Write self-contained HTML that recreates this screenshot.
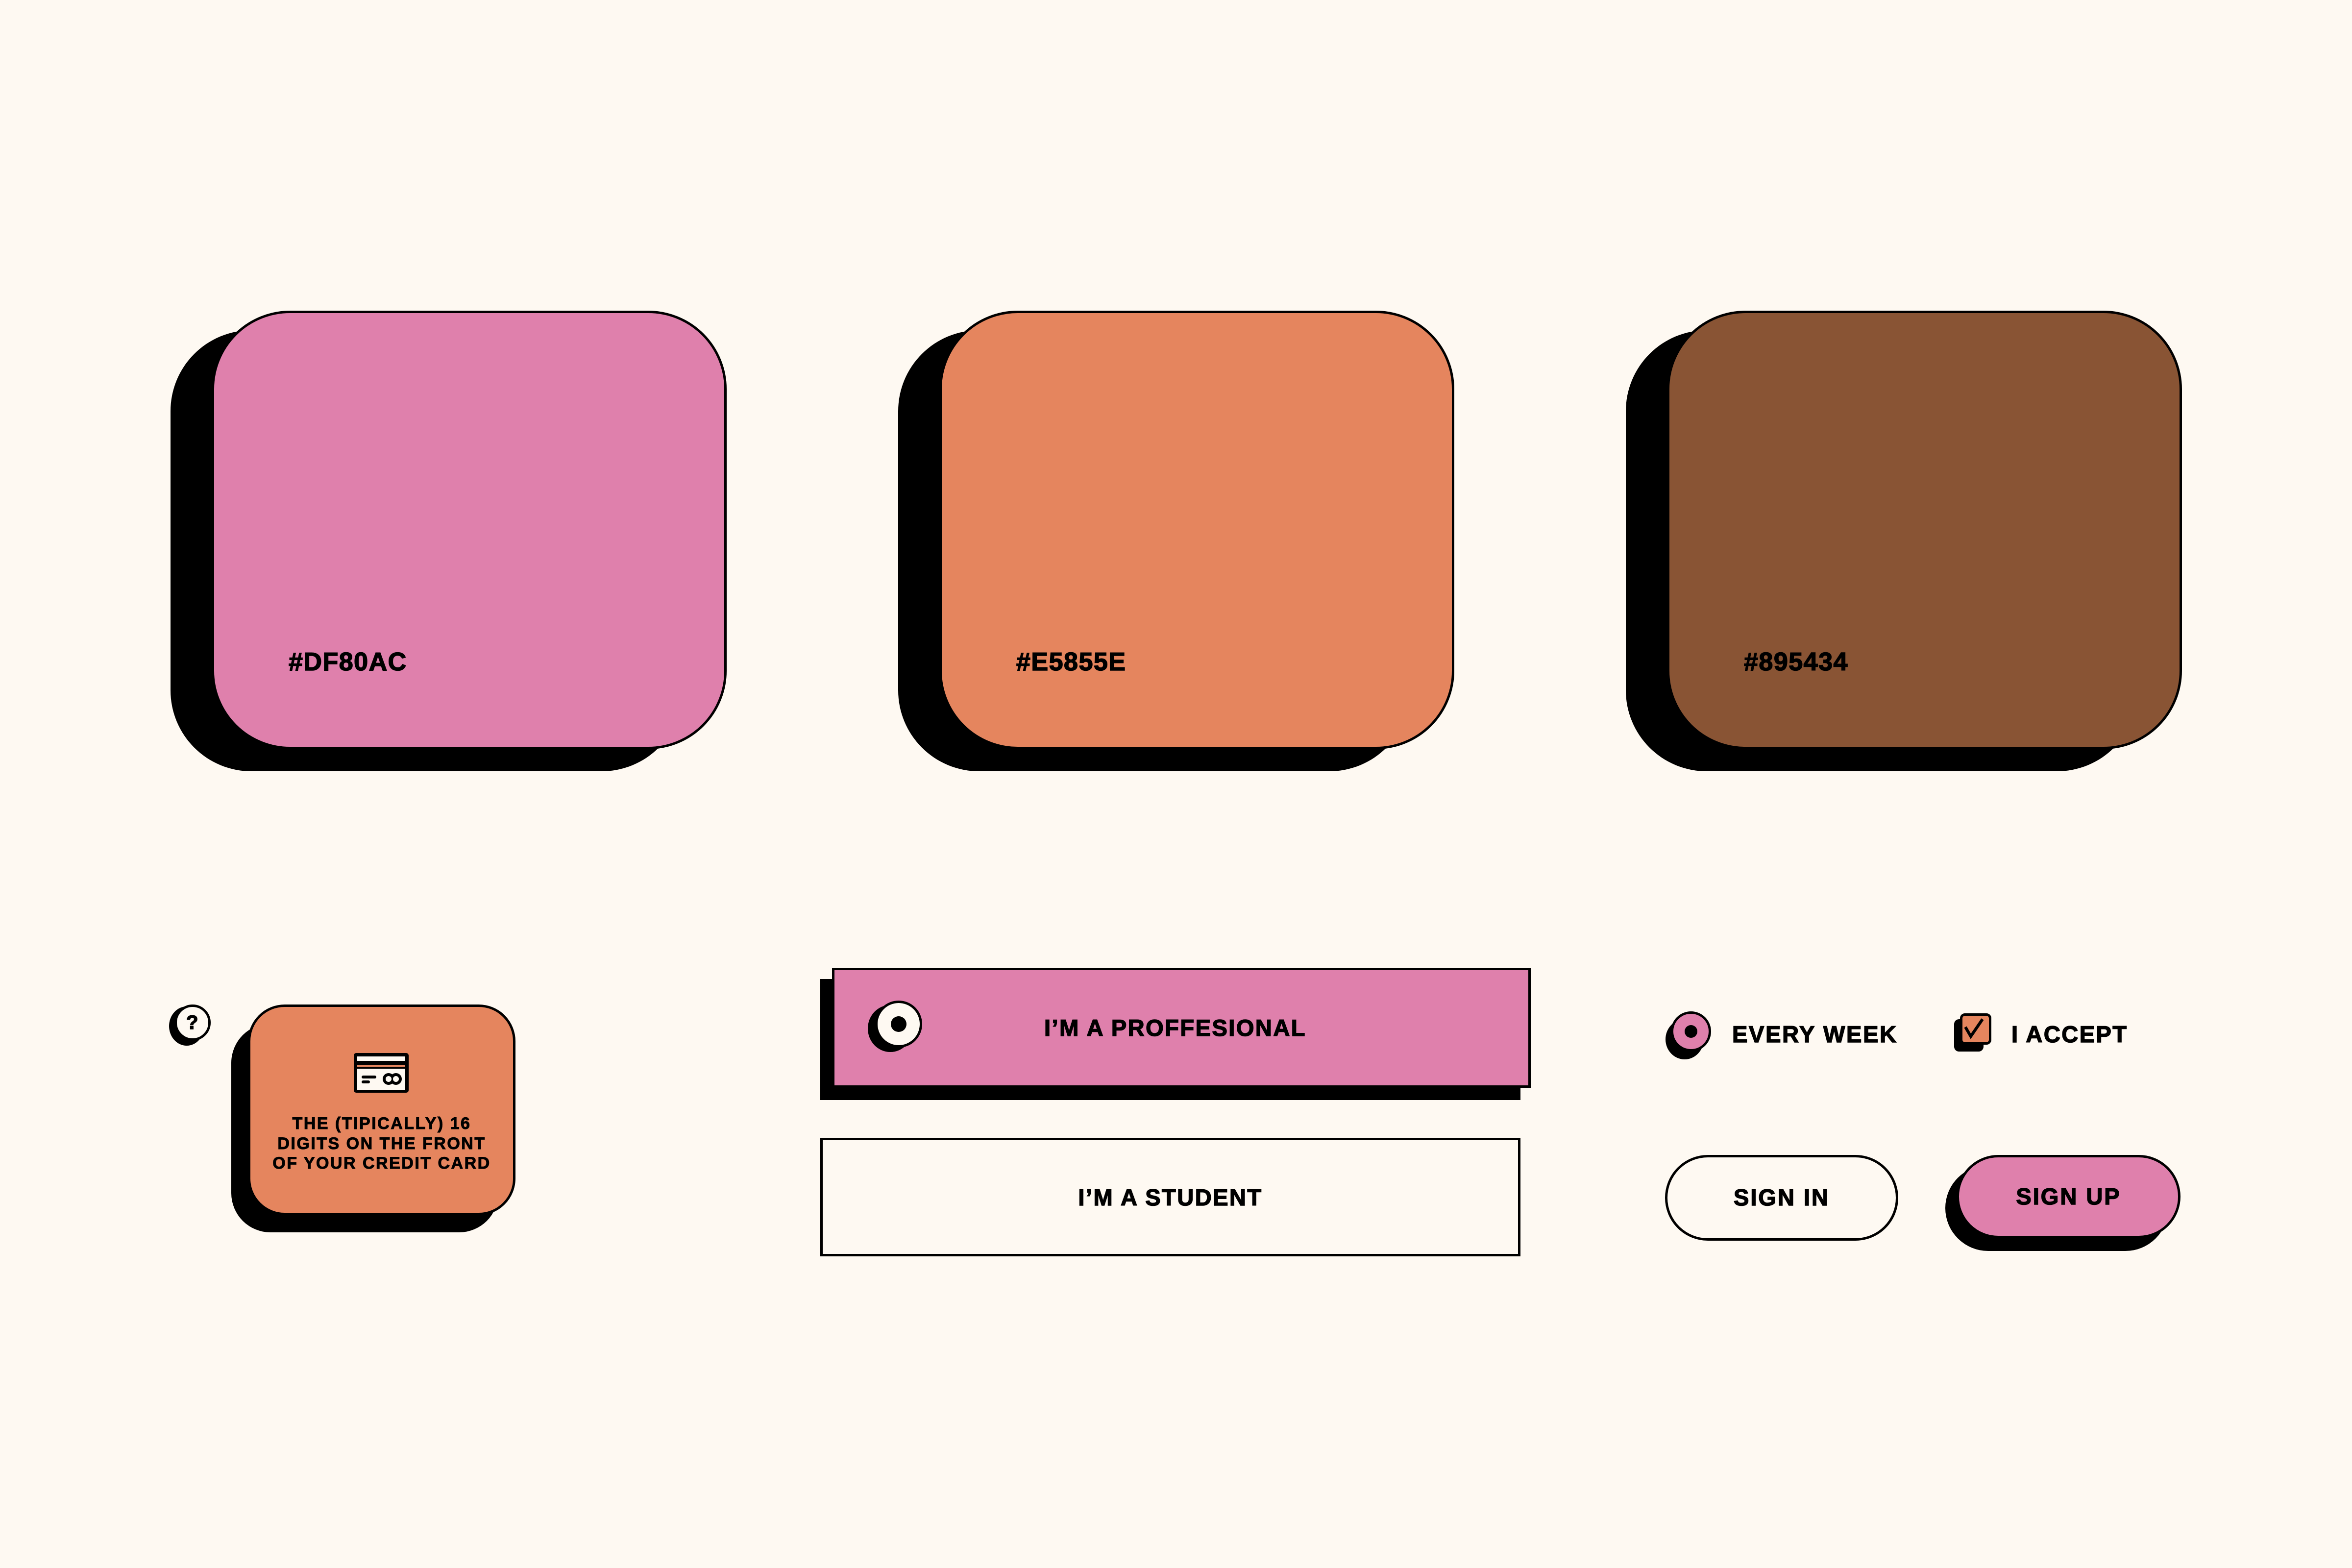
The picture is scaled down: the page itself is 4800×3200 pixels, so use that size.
<!DOCTYPE html>
<html><head><meta charset="utf-8"><style>
html,body{margin:0;padding:0}
body{width:4800px;height:3200px;background:#FEF9F2;position:relative;overflow:hidden;font-family:"Liberation Sans",sans-serif;font-weight:bold;color:#000}
.a{position:absolute;box-sizing:border-box}
.t{position:absolute;white-space:nowrap;font-weight:bold;line-height:1;-webkit-text-stroke:1.5px #000}
</style></head><body>

<!-- swatches -->
<div class="a" style="left:348px;top:674px;width:1045px;height:900px;background:#000;border-radius:165px"></div>
<div class="a" style="left:432px;top:634px;width:1051px;height:895px;background:#DF80AC;border:5px solid #000;border-radius:160px"></div>
<div class="t" style="left:589px;top:1325px;font-size:52px;letter-spacing:1.5px">#DF80AC</div>

<div class="a" style="left:1833px;top:674px;width:1045px;height:900px;background:#000;border-radius:165px"></div>
<div class="a" style="left:1917px;top:634px;width:1051px;height:895px;background:#E5855E;border:5px solid #000;border-radius:160px"></div>
<div class="t" style="left:2074px;top:1325px;font-size:52px;letter-spacing:1.5px">#E5855E</div>

<div class="a" style="left:3318px;top:674px;width:1045px;height:900px;background:#000;border-radius:165px"></div>
<div class="a" style="left:3402px;top:634px;width:1051px;height:895px;background:#895434;border:5px solid #000;border-radius:160px"></div>
<div class="t" style="left:3559px;top:1325px;font-size:52px;letter-spacing:1.5px">#895434</div>

<!-- tooltip -->
<div class="a" style="left:345px;top:2054px;width:72px;height:80px;background:#000;border-radius:50%"></div>
<div class="a" style="left:356px;top:2050px;width:74px;height:74px;background:#FEF9F2;border:5px solid #000;border-radius:50%"></div>
<div class="t" style="left:380px;top:2067px;font-size:40px">?</div>

<div class="a" style="left:472px;top:2089px;width:545px;height:426px;background:#000;border-radius:80px"></div>
<div class="a" style="left:506px;top:2050px;width:546px;height:430px;background:#E5855E;border:5px solid #000;border-radius:75px"></div>
<svg class="a" style="left:722px;top:2149px" width="112" height="81" viewBox="0 0 112 81">
<rect x="0" y="0" width="112" height="81" rx="5" fill="#000"/>
<rect x="7" y="7" width="98" height="9" fill="#FEF9F2"/>
<rect x="7" y="24" width="98" height="4" fill="#E5855E"/>
<rect x="7" y="32" width="98" height="43" fill="#FEF9F2"/>
<rect x="16" y="46" width="30" height="6" rx="3" fill="#000"/>
<rect x="16" y="56" width="17" height="6" rx="3" fill="#000"/>
<circle cx="71" cy="53" r="12" fill="#000"/><circle cx="86" cy="53" r="12" fill="#000"/>
<circle cx="71" cy="53" r="6" fill="#FEF9F2"/><circle cx="86" cy="53" r="6" fill="#FEF9F2"/>
</svg>
<div class="t" style="left:486px;width:586px;top:2273px;font-size:34px;line-height:40.5px;text-align:center;white-space:normal;letter-spacing:2.5px;-webkit-text-stroke:1px #000">THE (TIPICALLY) 16<br>DIGITS ON THE FRONT<br>OF YOUR CREDIT CARD</div>

<!-- option buttons -->
<div class="a" style="left:1674px;top:1998px;width:1429px;height:247px;background:#000"></div>
<div class="a" style="left:1698px;top:1975px;width:1426px;height:245px;background:#DF80AC;border:5px solid #000"></div>
<div class="a" style="left:1771px;top:2051px;width:92px;height:96px;background:#000;border-radius:50%"></div>
<div class="a" style="left:1786px;top:2042px;width:96px;height:96px;background:#FEF9F2;border:5px solid #000;border-radius:50%"></div>
<div class="a" style="left:1818px;top:2074px;width:32px;height:32px;background:#000;border-radius:50%"></div>
<div class="t" style="left:2131px;top:2074px;font-size:47px;letter-spacing:2.5px">I’M A PROFFESIONAL</div>

<div class="a" style="left:1674px;top:2322px;width:1429px;height:242px;background:#FEF9F2;border:5px solid #000"></div>
<div class="t" style="left:1674px;width:1429px;top:2420px;font-size:47px;letter-spacing:2.5px;text-align:center">I’M A STUDENT</div>

<!-- radio / checkbox -->
<div class="a" style="left:3399px;top:2080px;width:78px;height:82px;background:#000;border-radius:50%"></div>
<div class="a" style="left:3410px;top:2064px;width:82px;height:82px;background:#DF80AC;border:5px solid #000;border-radius:50%"></div>
<div class="a" style="left:3438px;top:2092px;width:26px;height:26px;background:#000;border-radius:50%"></div>
<div class="t" style="left:3535px;top:2087px;font-size:47px;letter-spacing:2.7px">EVERY WEEK</div>

<div class="a" style="left:3988px;top:2080px;width:60px;height:66px;background:#000;border-radius:10px"></div>
<div class="a" style="left:4000px;top:2068px;width:64px;height:64px;background:#E5855E;border:5px solid #000;border-radius:10px"></div>
<svg class="a" style="left:4000px;top:2068px" width="64" height="64" viewBox="0 0 64 64"><path d="M11 28 L22 47 L46 12" fill="none" stroke="#000" stroke-width="6"/></svg>
<div class="t" style="left:4105px;top:2087px;font-size:47px;letter-spacing:2.5px">I ACCEPT</div>

<!-- sign buttons -->
<div class="a" style="left:3398px;top:2357px;width:476px;height:175px;background:#FEF9F2;border:5px solid #000;border-radius:88px"></div>
<div class="t" style="left:3398px;width:476px;top:2420px;font-size:47px;letter-spacing:3px;text-align:center">SIGN IN</div>

<div class="a" style="left:3970px;top:2378px;width:455px;height:175px;background:#000;border-radius:88px"></div>
<div class="a" style="left:3993px;top:2357px;width:457px;height:170px;background:#DF80AC;border:5px solid #000;border-radius:85px"></div>
<div class="t" style="left:3993px;width:457px;top:2418px;font-size:47px;letter-spacing:3px;text-align:center">SIGN UP</div>

</body></html>
